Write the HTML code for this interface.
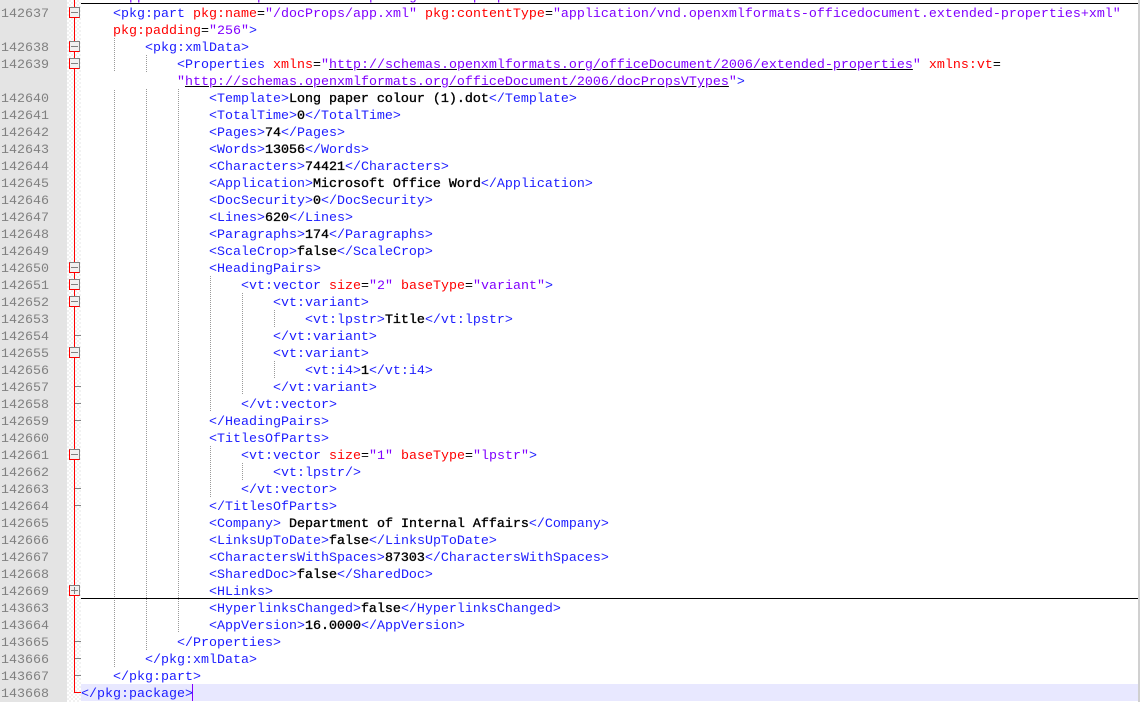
<!DOCTYPE html>
<html><head><meta charset="utf-8"><style>
html,body{margin:0;padding:0;background:#fff}
#p{position:relative;width:1140px;height:702px;overflow:hidden;background:#fff;font:13.33px/17px "Liberation Mono",monospace;color:#00f}
#p div{position:absolute}
.r{left:81px;height:17px;white-space:pre;color:#1c1cff;margin-top:2px}
.n{left:1px;width:60px;height:17px;color:#808080;white-space:pre;margin-top:2px}
.g{width:1px;background:repeating-linear-gradient(to bottom,#999 0 1px,transparent 1px 2px)}
.t{left:75px;width:6px;height:1px;background:#808080}
.b{left:69px;width:11px;height:11px;box-sizing:border-box;background:#f1f1f1;border:1px solid #808080;border-left-color:#f00;border-bottom-color:#f00}
.b i{position:absolute;left:1px;top:4px;width:7px;height:1px;background:#808080}
.b u{position:absolute;left:4px;top:1px;width:1px;height:7px;background:#808080}
b{color:#000;font-weight:normal;-webkit-text-stroke:.35px #000}
em{font-style:normal;color:#f00}
s{text-decoration:none;color:#8000ff}
a{color:#8000ff;text-decoration:underline;text-decoration-color:#000}
q{quotes:none;color:#000}
</style></head><body><div id="p">
<div style="left:0;top:0;width:67px;height:702px;background:#e4e4e4"></div>
<div style="left:67px;top:0;width:14px;height:702px;background:repeating-conic-gradient(#f1f1f1 0 25%,#fff 0 50%) 0 0/4px 4px"></div>
<div style="left:1138px;top:0;width:2px;height:702px;background:#d0d0d0"></div>
<div style="left:81px;top:684px;width:1057px;height:17px;background:#e8e8ff"></div>

<div class="g" style="left:114px;top:38px;height:629px"></div>
<div class="g" style="left:146px;top:55px;height:595px"></div>
<div class="g" style="left:178px;top:89px;height:544px"></div>
<div class="g" style="left:210px;top:276px;height:136px"></div>
<div class="g" style="left:210px;top:446px;height:51px"></div>
<div class="g" style="left:242px;top:293px;height:102px"></div>
<div class="g" style="left:242px;top:463px;height:17px"></div>
<div class="g" style="left:274px;top:310px;height:17px"></div>
<div class="g" style="left:274px;top:361px;height:17px"></div>
<div style="left:114px;top:72px;width:70px;height:17px;background:#fff"></div>

<div style="left:74px;top:0;width:1px;height:693px;background:#f00"></div>
<div style="left:74px;top:692px;width:7px;height:1px;background:#f00"></div>
<div class="t" style="top:335px"></div>
<div class="t" style="top:386px"></div>
<div class="t" style="top:403px"></div>
<div class="t" style="top:420px"></div>
<div class="t" style="top:488px"></div>
<div class="t" style="top:505px"></div>
<div class="t" style="top:641px"></div>
<div class="t" style="top:658px"></div>
<div class="t" style="top:675px"></div>
<div class="b" style="top:7px"><i></i></div>
<div class="b" style="top:41px"><i></i></div>
<div class="b" style="top:58px"><i></i></div>
<div class="b" style="top:262px"><i></i></div>
<div class="b" style="top:279px"><i></i></div>
<div class="b" style="top:296px"><i></i></div>
<div class="b" style="top:347px"><i></i></div>
<div class="b" style="top:449px"><i></i></div>
<div class="b" style="top:585px"><i></i><u></u></div>

<div style="left:81px;top:0;width:1057px;height:3px;overflow:hidden"><div class="r" style="left:32px;top:-13px"><s>"application/vnd.openxmlformats-package.core-properties+xml"</s></div></div>
<div style="left:81px;top:3px;width:1057px;height:1px;background:#000"></div>
<div style="left:81px;top:598px;width:1057px;height:1px;background:#000"></div>
<div style="left:192px;top:684px;width:1px;height:17px;background:#8000ff"></div>

<div class="n" style="top:4px">142637</div>
<div class="n" style="top:38px">142638</div>
<div class="n" style="top:55px">142639</div>
<div class="n" style="top:89px">142640</div>
<div class="n" style="top:106px">142641</div>
<div class="n" style="top:123px">142642</div>
<div class="n" style="top:140px">142643</div>
<div class="n" style="top:157px">142644</div>
<div class="n" style="top:174px">142645</div>
<div class="n" style="top:191px">142646</div>
<div class="n" style="top:208px">142647</div>
<div class="n" style="top:225px">142648</div>
<div class="n" style="top:242px">142649</div>
<div class="n" style="top:259px">142650</div>
<div class="n" style="top:276px">142651</div>
<div class="n" style="top:293px">142652</div>
<div class="n" style="top:310px">142653</div>
<div class="n" style="top:327px">142654</div>
<div class="n" style="top:344px">142655</div>
<div class="n" style="top:361px">142656</div>
<div class="n" style="top:378px">142657</div>
<div class="n" style="top:395px">142658</div>
<div class="n" style="top:412px">142659</div>
<div class="n" style="top:429px">142660</div>
<div class="n" style="top:446px">142661</div>
<div class="n" style="top:463px">142662</div>
<div class="n" style="top:480px">142663</div>
<div class="n" style="top:497px">142664</div>
<div class="n" style="top:514px">142665</div>
<div class="n" style="top:531px">142666</div>
<div class="n" style="top:548px">142667</div>
<div class="n" style="top:565px">142668</div>
<div class="n" style="top:582px">142669</div>
<div class="n" style="top:599px">143663</div>
<div class="n" style="top:616px">143664</div>
<div class="n" style="top:633px">143665</div>
<div class="n" style="top:650px">143666</div>
<div class="n" style="top:667px">143667</div>
<div class="n" style="top:684px">143668</div>

<div class="r" style="top:4px">    &lt;pkg:part <em>pkg:name</em><q>=</q><s>"/docProps/app.xml"</s> <em>pkg:contentType</em><q>=</q><s>"application/vnd.openxmlformats-officedocument.extended-properties+xml"</s></div>
<div class="r" style="top:21px">    <em>pkg:padding</em><q>=</q><s>"256"</s>&gt;</div>
<div class="r" style="top:38px">        &lt;pkg:xmlData&gt;</div>
<div class="r" style="top:55px">            &lt;Properties <em>xmlns</em><q>=</q><s>"<a>http://schemas.openxmlformats.org/officeDocument/2006/extended-properties</a>"</s> <em>xmlns:vt</em><q>=</q></div>
<div class="r" style="top:72px">            <s>"<a>http://schemas.openxmlformats.org/officeDocument/2006/docPropsVTypes</a>"</s>&gt;</div>
<div class="r" style="top:89px">                &lt;Template&gt;<b>Long paper colour (1).dot</b>&lt;/Template&gt;</div>
<div class="r" style="top:106px">                &lt;TotalTime&gt;<b>0</b>&lt;/TotalTime&gt;</div>
<div class="r" style="top:123px">                &lt;Pages&gt;<b>74</b>&lt;/Pages&gt;</div>
<div class="r" style="top:140px">                &lt;Words&gt;<b>13056</b>&lt;/Words&gt;</div>
<div class="r" style="top:157px">                &lt;Characters&gt;<b>74421</b>&lt;/Characters&gt;</div>
<div class="r" style="top:174px">                &lt;Application&gt;<b>Microsoft Office Word</b>&lt;/Application&gt;</div>
<div class="r" style="top:191px">                &lt;DocSecurity&gt;<b>0</b>&lt;/DocSecurity&gt;</div>
<div class="r" style="top:208px">                &lt;Lines&gt;<b>620</b>&lt;/Lines&gt;</div>
<div class="r" style="top:225px">                &lt;Paragraphs&gt;<b>174</b>&lt;/Paragraphs&gt;</div>
<div class="r" style="top:242px">                &lt;ScaleCrop&gt;<b>false</b>&lt;/ScaleCrop&gt;</div>
<div class="r" style="top:259px">                &lt;HeadingPairs&gt;</div>
<div class="r" style="top:276px">                    &lt;vt:vector <em>size</em><q>=</q><s>"2"</s> <em>baseType</em><q>=</q><s>"variant"</s>&gt;</div>
<div class="r" style="top:293px">                        &lt;vt:variant&gt;</div>
<div class="r" style="top:310px">                            &lt;vt:lpstr&gt;<b>Title</b>&lt;/vt:lpstr&gt;</div>
<div class="r" style="top:327px">                        &lt;/vt:variant&gt;</div>
<div class="r" style="top:344px">                        &lt;vt:variant&gt;</div>
<div class="r" style="top:361px">                            &lt;vt:i4&gt;<b>1</b>&lt;/vt:i4&gt;</div>
<div class="r" style="top:378px">                        &lt;/vt:variant&gt;</div>
<div class="r" style="top:395px">                    &lt;/vt:vector&gt;</div>
<div class="r" style="top:412px">                &lt;/HeadingPairs&gt;</div>
<div class="r" style="top:429px">                &lt;TitlesOfParts&gt;</div>
<div class="r" style="top:446px">                    &lt;vt:vector <em>size</em><q>=</q><s>"1"</s> <em>baseType</em><q>=</q><s>"lpstr"</s>&gt;</div>
<div class="r" style="top:463px">                        &lt;vt:lpstr/&gt;</div>
<div class="r" style="top:480px">                    &lt;/vt:vector&gt;</div>
<div class="r" style="top:497px">                &lt;/TitlesOfParts&gt;</div>
<div class="r" style="top:514px">                &lt;Company&gt;<b> Department of Internal Affairs</b>&lt;/Company&gt;</div>
<div class="r" style="top:531px">                &lt;LinksUpToDate&gt;<b>false</b>&lt;/LinksUpToDate&gt;</div>
<div class="r" style="top:548px">                &lt;CharactersWithSpaces&gt;<b>87303</b>&lt;/CharactersWithSpaces&gt;</div>
<div class="r" style="top:565px">                &lt;SharedDoc&gt;<b>false</b>&lt;/SharedDoc&gt;</div>
<div class="r" style="top:582px">                &lt;HLinks&gt;</div>
<div class="r" style="top:599px">                &lt;HyperlinksChanged&gt;<b>false</b>&lt;/HyperlinksChanged&gt;</div>
<div class="r" style="top:616px">                &lt;AppVersion&gt;<b>16.0000</b>&lt;/AppVersion&gt;</div>
<div class="r" style="top:633px">            &lt;/Properties&gt;</div>
<div class="r" style="top:650px">        &lt;/pkg:xmlData&gt;</div>
<div class="r" style="top:667px">    &lt;/pkg:part&gt;</div>
<div class="r" style="top:684px">&lt;/pkg:package&gt;</div>
</div></body></html>
